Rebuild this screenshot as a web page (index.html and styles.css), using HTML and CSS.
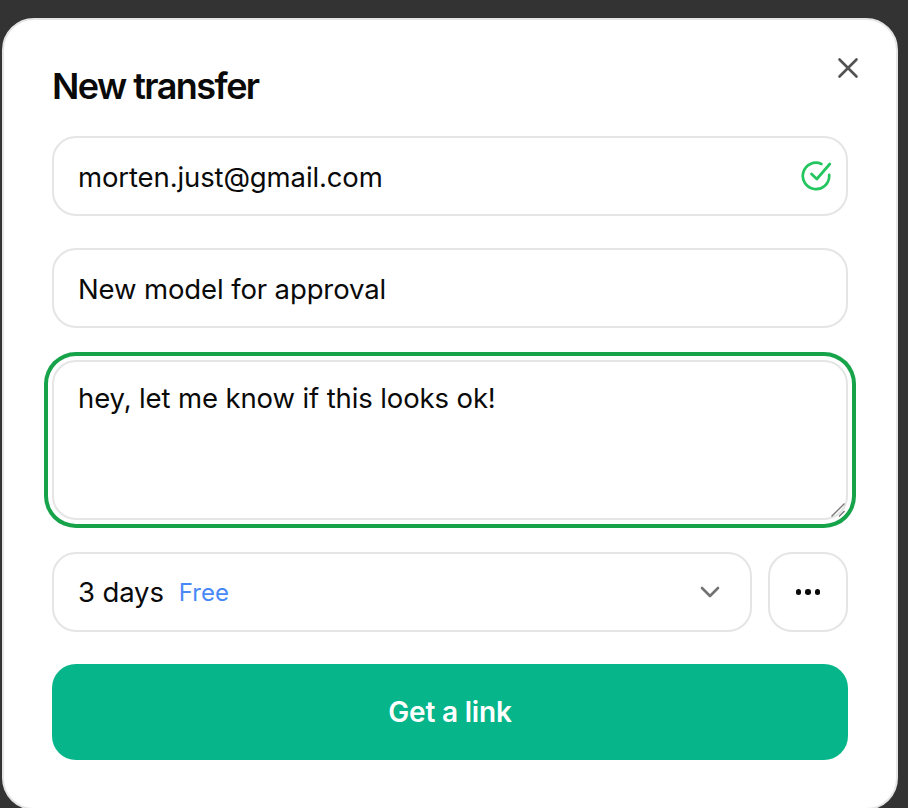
FILE: index.html
```html
<!DOCTYPE html>
<html lang="en">
<head>
<meta charset="utf-8">
<title>New transfer</title>
<link rel="stylesheet" href="styles.css">
</head>
<body>
<main class="modal">
  <button class="close" aria-label="Close">
    <svg viewBox="0 0 24 24" width="24" height="24" fill="none" stroke="#525252" stroke-width="2.6" stroke-linecap="round"><path d="M3.500 3.500 20.500 20.500M20.500 3.500 3.500 20.500"/></svg>
  </button>
  <h1 class="title">New transfer</h1>
  <div class="form">
    <div class="field">
      <span class="value">morten.just@gmail.com</span>
      <svg class="check" viewBox="0 0 32 32" width="32" height="32" fill="none" stroke="#22c55e" stroke-width="2.7" stroke-linecap="round" stroke-linejoin="round"><path d="M29.200 14.800V16A13.200 13.200 0 1 1 21.400 3.900"/><path d="M29.800 4 16.800 19l-5.300-5"/></svg>
    </div>
    <div class="field"><span class="value">New model for approval</span></div>
    <div class="ring">
      <div class="area">
        <span>hey, let me know if this looks ok!</span>
        <svg class="grip" viewBox="0 0 16 16" width="16" height="16" fill="none" stroke="#7a7a7a" stroke-width="1.4"><path d="M1.500 14.500 14.500 1.500M9 14.500 14.500 9"/></svg>
      </div>
    </div>
    <div class="row">
      <div class="field select">
        <span class="days">3 days</span>
        <span class="free">Free</span>
        <svg class="chev" viewBox="0 0 20 12" width="20" height="12" fill="none" stroke="#737373" stroke-width="2.600" stroke-linecap="round" stroke-linejoin="round"><path d="M2 2l8 8 8-8"/></svg>
      </div>
      <button class="more" aria-label="More options"><i></i><i></i><i></i></button>
    </div>
    <button class="cta">Get a link</button>
  </div>
</main>
</body>
</html>
```

FILE: styles.css
```css
* { box-sizing: border-box; }
html, body { margin: 0; height: 808px; overflow: hidden; }
body {
  background: #333333;
  padding: 18px 10px 0 2px;
  font-family: Inter, "Liberation Sans", sans-serif;
  color: #0a0a0a;
}
.modal {
  position: relative;
  width: 896px;
  height: 792px;
  background: #ffffff;
  border: 2px solid #e5e5e5;
  border-radius: 32px;
  padding: 48px;
}
.close {
  position: absolute;
  top: 36px;
  right: 36px;
  padding: 0;
  width: 24px;
  height: 24px;
  border: 0;
  background: none;
  display: flex;
}
.title {
  margin: 0;
  font-size: 36px;
  line-height: 36px;
  font-weight: 600;
  letter-spacing: -1.55px;
  height: 68px;
}
.form { display: flex; flex-direction: column; gap: 32px; }
.field {
  height: 80px;
  border: 2px solid #e5e5e5;
  border-radius: 24px;
  padding: 0 24px;
  display: flex;
  align-items: center;
  justify-content: space-between;
  font-size: 27.5px;
  letter-spacing: -0.12px;
}
.value { padding-top: 2px; }
.check { flex: none; margin-right: -10.2px; }
.ring {
  margin: -8px;
  padding: 8px;
  border-radius: 32px;
  box-shadow: inset 0 0 0 4px #16a34a;
  height: 176px;
}
.area {
  position: relative;
  height: 160px;
  border: 2px solid #e5e5e5;
  border-radius: 24px;
  padding: 19px 24px;
  font-size: 27.5px;
  line-height: 34px;
  letter-spacing: -0.12px;
}
.grip { position: absolute; right: 0; bottom: 0; }
.row { display: flex; gap: 16px; }
.select { flex: 1; justify-content: flex-start; }
.free { margin-left: 15px; font-size: 24px; letter-spacing: 0; color: #4789f6; }
.chev { margin-left: auto; margin-right: 6px; }
.more {
  width: 80px;
  height: 80px;
  flex: none;
  background: #fff;
  border: 2px solid #e5e5e5;
  border-radius: 24px;
  padding: 0;
  display: flex;
  align-items: center;
  justify-content: center;
  gap: 4px;
}
.more i { width: 5.5px; height: 5.500px; border-radius: 50%; background: #0a0a0a; }
.cta {
  height: 96px;
  border: 0;
  border-radius: 24px;
  background: #06b58a;
  color: #fff;
  font: 600 28px Inter, "Liberation Sans", sans-serif;
  letter-spacing: -0.2px;
}
```
